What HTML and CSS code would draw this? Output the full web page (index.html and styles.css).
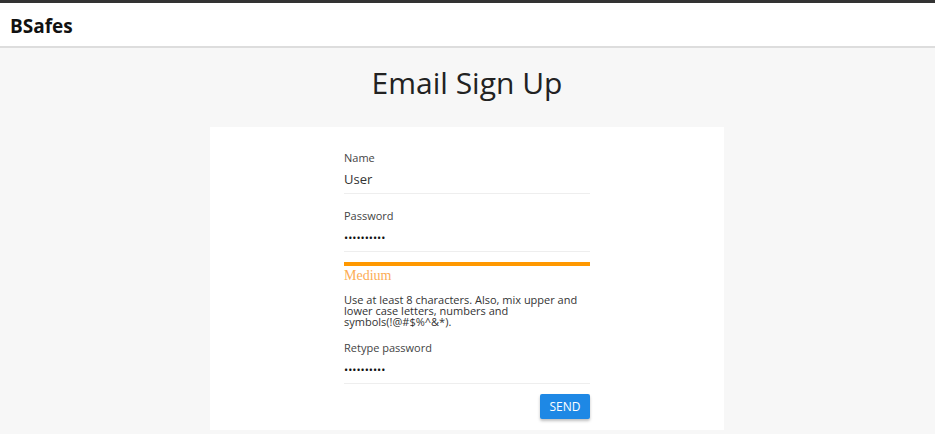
FILE: index.html
```html
<!DOCTYPE html>
<html lang="en">
<head>
  <meta charset="UTF-8" />
  <meta name="viewport" content="width=device-width, initial-scale=1.0"/>
  <title>BSafes - Email Sign Up</title>
  <link rel="stylesheet" href="styles.css">
</head>
<body>
  <header class="topbar">
    <div class="brand">BSafes</div>
  </header>

  <main class="page">
    <h1>Email Sign Up</h1>

    <div class="card">
      <form class="signup">
        <label class="field">
          <span>Name</span>
          <input type="text" value="User" />
        </label>

        <label class="field">
          <span>Password</span>
          <input type="password" value="abcdefghij" />
        </label>

        <div class="meter"><div class="meter-fill" style="width: 100%"></div></div>
        <div class="strength">Medium</div>
        <p class="hint">Use at least 8 characters. Also, mix upper and lower case letters, numbers and symbols(!@#$%^&amp;*).</p>

        <label class="field">
          <span>Retype password</span>
          <input type="password" value="abcdefghij" />
        </label>

        <div class="actions">
          <button type="button">SEND</button>
        </div>
      </form>
    </div>
  </main>
</body>
</html>
```

FILE: styles.css
```css
* {
  box-sizing: border-box;
}

body {
  margin: 0;
  font-family: 'Open Sans', 'Noto Sans', sans-serif;
  background: #f7f7f7;
  color: #333;
}

.topbar {
  background: #fff;
  border-top: 3px solid #333;
  border-bottom: 2px solid #ddd;
  height: 48px;
  display: flex;
  align-items: center;
  padding: 3px 10px 0;
}

.brand {
  font-size: 19px;
  font-weight: 700;
  color: #111;
}

.page {
  display: flex;
  flex-direction: column;
  align-items: center;
  padding-right: 1px;
}

h1 {
  margin: 13px 0 22px;
  font-size: 30px;
  font-weight: 400;
  line-height: 44px;
  color: #222;
}

.card {
  background: #fff;
  width: 514px;
  padding: 24px 0 11px;
  display: flex;
  justify-content: center;
}

.signup {
  width: 246px;
  display: flex;
  flex-direction: column;
}

.field {
  display: flex;
  flex-direction: column;
  margin-bottom: 15px;
}

.field span {
  font-size: 11px;
  line-height: 14px;
  color: #444;
}

.field input {
  font-family: inherit;
  font-size: 13px;
  color: #333;
  height: 29px;
  padding: 0;
  border: none;
  border-bottom: 1px solid #eee;
  outline: none;
  background: transparent;
}

.field input[type="password"] {
  font-size: 11px;
  color: #111;
}

.meter {
  height: 4px;
  margin-top: -5px;
  background: #eee;
}

.meter-fill {
  height: 100%;
  background: #ff9800;
}

.strength {
  font-family: 'Liberation Serif', serif;
  font-size: 14px;
  line-height: 18px;
  margin-top: 1px;
  color: #fcac55;
}

.hint {
  font-size: 11px;
  line-height: 11px;
  margin: 9px 0 14px;
  color: #333;
}

.actions {
  display: flex;
  justify-content: flex-end;
  margin-top: -5px;
}

button {
  font-family: inherit;
  font-size: 12px;
  color: #fff;
  background: #1e88e5;
  border: none;
  border-radius: 2px;
  width: 50px;
  height: 25px;
  padding: 0;
  cursor: pointer;
  box-shadow: 0 2px 3px rgba(0, 0, 0, 0.25);
}
```
